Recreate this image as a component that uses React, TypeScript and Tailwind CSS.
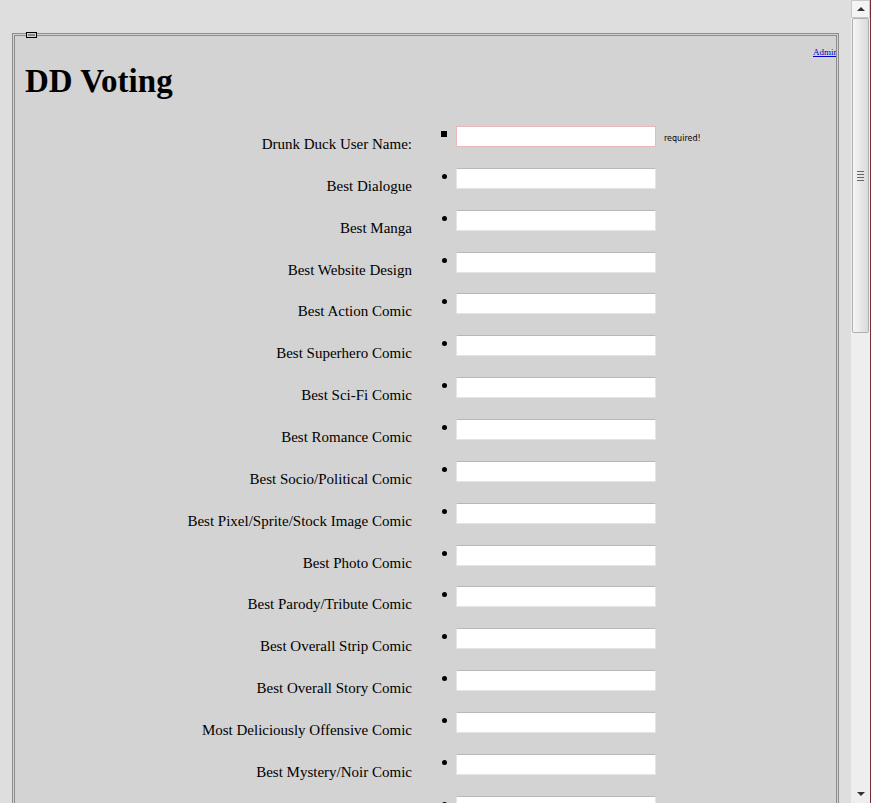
const labels = [
  "Drunk Duck User Name:",
  "Best Dialogue",
  "Best Manga",
  "Best Website Design",
  "Best Action Comic",
  "Best Superhero Comic",
  "Best Sci-Fi Comic",
  "Best Romance Comic",
  "Best Socio/Political Comic",
  "Best Pixel/Sprite/Stock Image Comic",
  "Best Photo Comic",
  "Best Parody/Tribute Comic",
  "Best Overall Strip Comic",
  "Best Overall Story Comic",
  "Most Deliciously Offensive Comic",
  "Best Mystery/Noir Comic",
  "Best Horror Comic",
];

const Scrollbar = () => (
  <div className="flex h-full w-[20px] flex-col border-r border-[#7a2a3a] bg-[#eeeeee]">
    <div className="flex h-[18px] items-center justify-center border border-[#c8c8c8] bg-[#f4f4f4]">
      <div className="h-0 w-0 border-x-[4px] border-b-[4px] border-x-transparent border-b-[#333]" />
    </div>
    <div className="mx-[1px] flex h-[315px] items-center justify-center rounded-[2px] border border-[#b0b0b0] bg-gradient-to-r from-[#f6f6f6] to-[#dadada]">
      <div className="flex flex-col gap-[2px]">
        <div className="h-px w-[7px] bg-[#666]" />
        <div className="h-px w-[7px] bg-[#666]" />
        <div className="h-px w-[7px] bg-[#666]" />
        <div className="h-px w-[7px] bg-[#666]" />
      </div>
    </div>
    <div className="flex-1" />
    <div className="flex h-[18px] items-center justify-center">
      <div className="h-0 w-0 border-x-[4px] border-t-[4px] border-x-transparent border-t-[#333]" />
    </div>
  </div>
);

export default function App() {
  return (
    <div
      className="flex h-[803px] w-[871px] overflow-hidden bg-[#dedede]"
      style={{ fontFamily: '"Liberation Serif", "Times New Roman", serif' }}
    >
      <div className="h-full w-[851px] overflow-hidden pl-[12px] pt-[33px]">
        <div className="relative h-[900px] w-[827px] border-[3px] border-double border-[#8c8c8c] bg-[#d3d3d3]">
          <div className="absolute -top-[4px] left-[11px] h-[6px] w-[11px] border border-black bg-[#d3d3d3]">
            <div className="mx-auto mt-[1px] h-[2px] w-[7px] border-y border-[#888]" />
          </div>
          <div className="flex justify-end pt-[11px]">
            <a
              href="#"
              className="h-[10px] w-[23px] overflow-hidden whitespace-nowrap text-[9px] leading-[10px] text-[#0000cc] underline"
            >
              Admin
            </a>
          </div>
          <h1 className="ml-[10px] mt-[6px] text-[33px] font-bold leading-[37px] text-black">
            DD Voting
          </h1>
          <div className="mt-[26px] flex flex-col">
            {labels.map((label, i) => (
              <div key={label} className="flex h-[41.87px] shrink-0 items-start">
                <div className="w-[397px] pt-[9px] text-right text-[15px] leading-[18px] text-black">
                  {label}
                </div>
                <div className="flex w-[44px] justify-end pr-[9px] pt-[5px]">
                  {i === 0 ? (
                    <div className="h-[6px] w-[6px] bg-black" />
                  ) : (
                    <div className="mt-[1px] h-[5px] w-[5px] rounded-full bg-black" />
                  )}
                </div>
                <div
                  className={`h-[21px] w-[200px] border bg-white ${
                    i === 0
                      ? "border-[#e6b8b8]"
                      : "border-[#e4e4e4] border-t-[#b8b8b8]"
                  }`}
                />
                {i === 0 && (
                  <span
                    className="ml-[8px] pt-[8px] text-[8px] leading-[10px] text-black"
                    style={{ fontFamily: '"DejaVu Sans", Verdana, sans-serif' }}
                  >
                    required!
                  </span>
                )}
              </div>
            ))}
          </div>
        </div>
      </div>
      <Scrollbar />
    </div>
  );
}
